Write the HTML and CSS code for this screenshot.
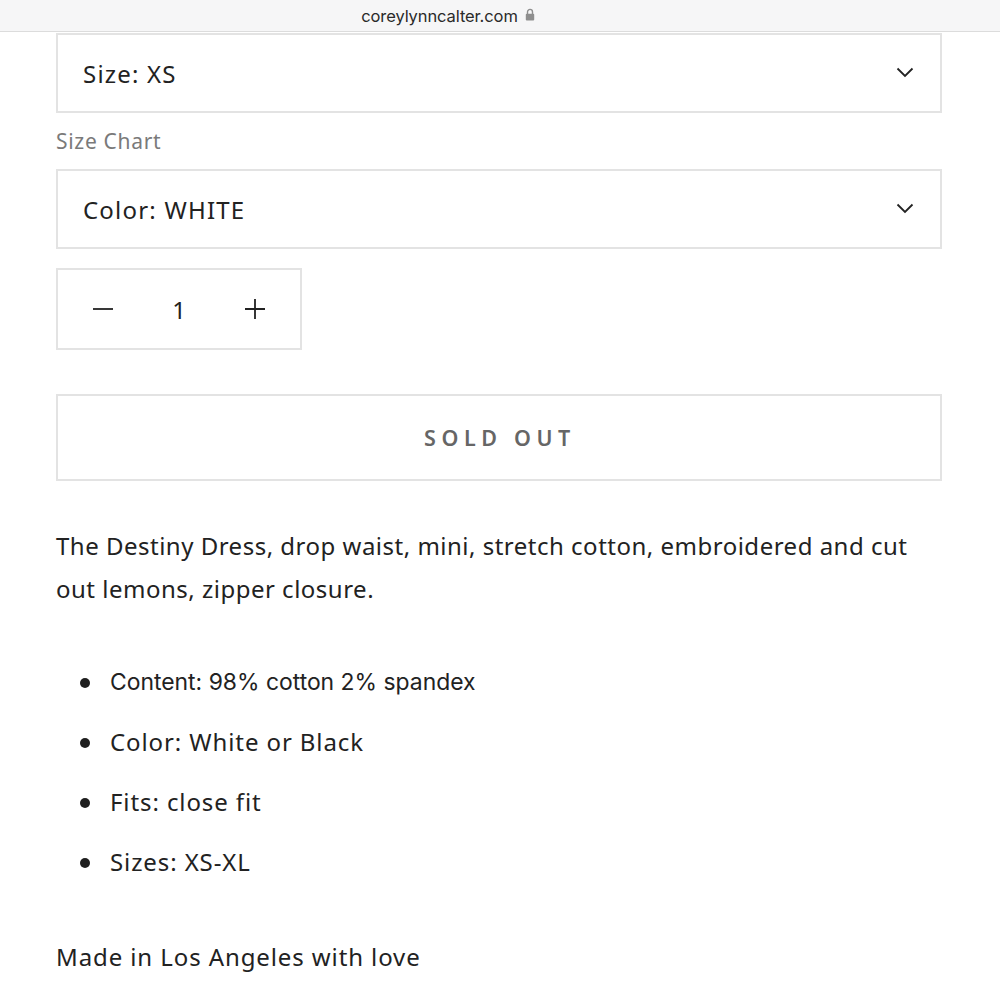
FILE: index.html
```html
<!DOCTYPE html>
<html>
<head>
<meta charset="utf-8">
<link rel="stylesheet" href="styles.css">
</head>
<body>
<header class="urlbar">
  <span class="url">coreylynncalter.com</span>
  <svg class="lock" width="10" height="13" viewBox="0 0 10 13"><path d="M2.5 6V3.9a2.5 2.5 0 0 1 5 0V6" fill="none" stroke="#8e8e8e" stroke-width="1.4"/><rect x="0.8" y="5.8" width="8.4" height="6.7" rx="1" fill="#8e8e8e"/></svg>
</header>
<main class="page">
  <div class="select first">
    <span class="select-label">Size: XS</span>
    <svg class="chev" width="18" height="11" viewBox="0 0 18 11"><path d="M1.5 1.5L9 9l7.5-7.5" fill="none" stroke="#222" stroke-width="1.8"/></svg>
  </div>
  <div class="size-chart">Size Chart</div>
  <div class="select">
    <span class="select-label">Color: WHITE</span>
    <svg class="chev" width="18" height="11" viewBox="0 0 18 11"><path d="M1.5 1.5L9 9l7.5-7.5" fill="none" stroke="#222" stroke-width="1.8"/></svg>
  </div>
  <div class="qty">
    <svg class="qbtn" width="20" height="20" viewBox="0 0 20 20"><path d="M0 10h20" stroke="#222" stroke-width="1.8"/></svg>
    <span class="qnum">1</span>
    <svg class="qbtn" width="20" height="20" viewBox="0 0 20 20"><path d="M0 10h20M10 0v20" stroke="#222" stroke-width="1.8"/></svg>
  </div>
  <div class="soldout">SOLD OUT</div>
  <p class="desc">The Destiny Dress, drop waist, mini, stretch cotton, embroidered and cut out lemons, zipper closure.</p>
  <ul class="specs">
    <li class="sys">Content: 98% cotton 2% spandex</li>
    <li>Color: White or Black</li>
    <li>Fits: close fit</li>
    <li>Sizes: XS-XL</li>
  </ul>
  <p class="made">Made in Los Angeles with love</p>
</main>
</body>
</html>
```
FILE: styles.css
```css
* { box-sizing: border-box; }
html, body { margin: 0; padding: 0; background: #fff; }
body { font-family: "Noto Sans", "Open Sans", sans-serif; color: #222; overflow: hidden; height: 1000px; }

.urlbar {
  height: 32px;
  background: #f6f6f7;
  border-bottom: 1px solid #dcdcdc;
  display: flex;
  align-items: center;
  justify-content: center;
  gap: 7px;
  padding-right: 104px;
  position: relative;
  z-index: 2;
}
.url { font-family: "Inter", "Liberation Sans", sans-serif; font-size: 16.5px; color: #2a2a2a; letter-spacing: -0.1px; }
.lock { margin-top: -2px; }

.page { padding: 0 58px 0 56px; }

.select {
  height: 80px;
  border: 2px solid #e3e3e3;
  display: flex;
  align-items: center;
  justify-content: space-between;
  padding: 0 26px 0 25px;
}
.select.first { margin-top: 1px; }
.select-label { font-size: 24px; letter-spacing: 1.2px; color: #222; }
.chev { margin-top: -2px; }

.size-chart { font-size: 21px; letter-spacing: 0.7px; color: #7a7a7a; height: 56px; display: flex; align-items: center; }

.qty {
  margin-top: 19px;
  width: 246px;
  height: 82px;
  border: 2px solid #e3e3e3;
  display: flex;
  align-items: center;
  justify-content: space-between;
  padding: 0 35px 0 35px;
}
.qnum { font-size: 24px; color: #222; }

.soldout {
  margin-top: 44px;
  height: 87px;
  border: 2px solid #e3e3e3;
  display: flex;
  align-items: center;
  justify-content: center;
  font-size: 21.5px;
  font-weight: 600;
  letter-spacing: 5.6px;
  color: #666;
  padding-left: 2px;
}

.desc { margin: 43px 0 0; font-size: 24px; letter-spacing: 0.5px; line-height: 43px; color: #222; }

.specs { margin: 42px 0 0; padding: 0 0 0 54px; list-style: none; }
.specs li { font-size: 24px; letter-spacing: 0.9px; height: 60px; line-height: 60px; position: relative; color: #222; }
.specs li::before {
  content: "";
  position: absolute;
  left: -30px;
  top: 26px;
  width: 10px;
  height: 10px;
  border-radius: 50%;
  background: #1f1f1f;
}
.specs li.sys { font-family: "Inter", "Liberation Sans", sans-serif; font-size: 22.9px; letter-spacing: 0; }

.made { margin: 48px 0 0; font-size: 24px; letter-spacing: 0.9px; color: #222; }
```
